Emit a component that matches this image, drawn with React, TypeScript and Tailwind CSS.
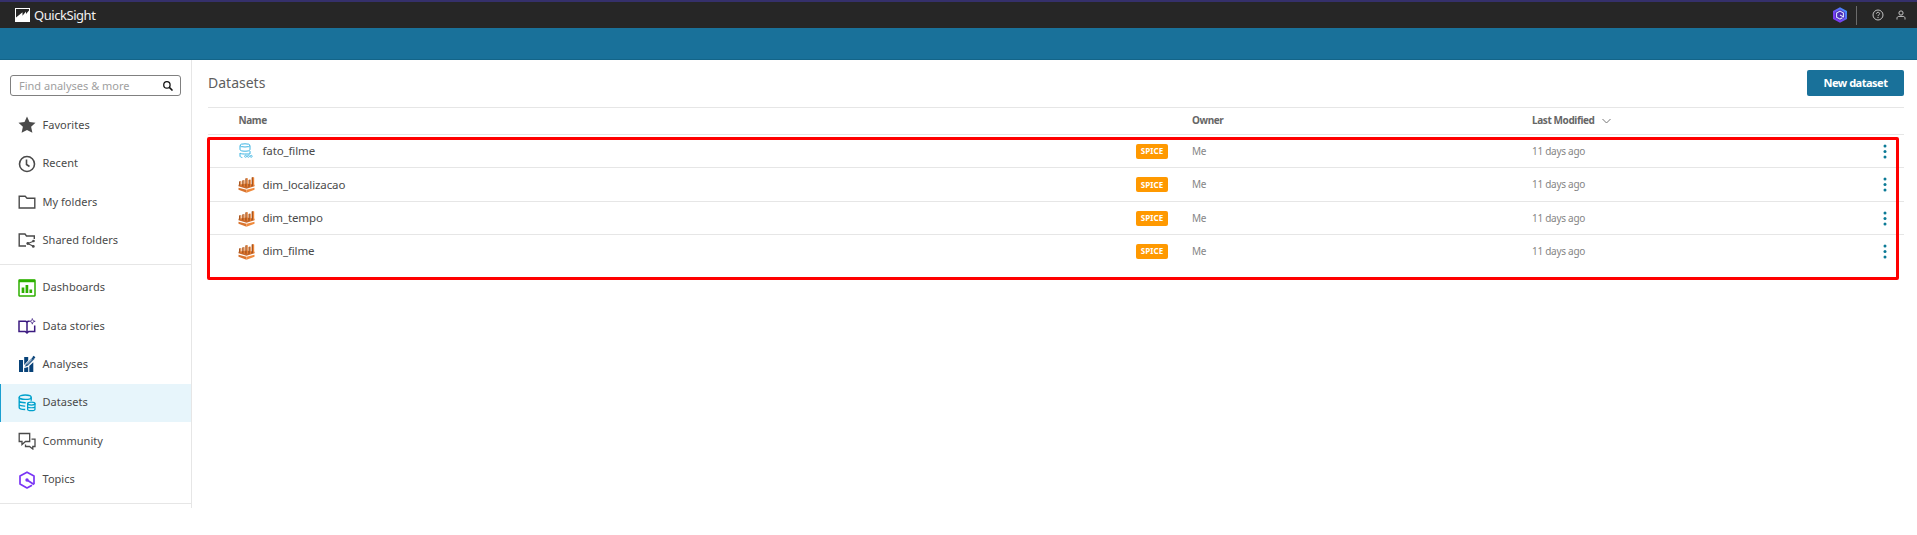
import type { ReactNode } from "react";

const Stroke = ({ color = "#4a4a4a", w = 1.3, children }: { color?: string; w?: number; children: ReactNode }) => (
  <svg width="18" height="18" viewBox="0 0 18 18" fill="none" stroke={color} strokeWidth={w} className="shrink-0">
    {children}
  </svg>
);

const StarIcon = () => (
  <Stroke w={0}>
    <path fill="#4a4a4a" d="M9 .5l2.500 5.500 6 .7-4.400 4.100 1.300 6L9 14.100 3.600 16.800l1.300-6L.5 6.700l6-.7z" />
  </Stroke>
);
const ClockIcon = () => (
  <Stroke w={1.6}>
    <circle cx="9" cy="9" r="7.500" />
    <path d="M8.500 4.500V9.500l3 2" />
  </Stroke>
);
const FolderIcon = () => (
  <Stroke w={1.4}>
    <path d="M1.200 3.300H7.200L9 5.200h7.800v9.800H1.200z" />
  </Stroke>
);
const SharedIcon = () => (
  <Stroke w={1.4}>
    <path d="M8 15H1.200V3H7L8.500 5h7.800v3" />
    <path d="M15.500 10.200L9.800 12.500l5.500 2.800" strokeWidth="1.100" />
    <g fill="#4a4a4a" stroke="none">
      <circle cx="15.500" cy="10" r="1.300" />
      <circle cx="9.800" cy="12.500" r="1.400" />
      <circle cx="15.300" cy="15.400" r="1.400" />
    </g>
  </Stroke>
);
const DashboardIcon = () => (
  <Stroke color="#2eb000" w={1.5}>
    <rect x="1" y="1" width="16" height="16" rx=".4" />
    <path d="M1 2h16" strokeWidth="2.500" />
    <path d="M5 14V8.500M8.900 14V6M12.800 14v-3.500" strokeWidth="2.700" />
  </Stroke>
);
const StoriesIcon = () => (
  <Stroke color="#3b1a80" w={1.5}>
    <path d="M11.500 4.300H10L9 5.500 7.800 4.300H1v10.200h6.200L9 16l1.700-1.500h6V8.500M9 5.500V16.500" />
    <path d="M14.300 1.500L15 3.600l2.200.7-2.200.7-.7 2.200-.7-2.200-2.200-.7 2.200-.7z" strokeWidth=".7" />
  </Stroke>
);
const AnalysesIcon = () => (
  <Stroke w={0}>
    <g fill="#084278">
      <path d="M1 5h4v12H1zM6.200 2h4v3.500L6.200 10zM6.200 13l4-1v5h-4zM11.300 11l4-3.800V17h-4z" />
      <path d="M6.500 12.200l1-3L14.700 2l2.200 1.800-7.300 7.200z" stroke="#fff" strokeWidth=".7" />
      <path d="M14.300 2.200L15.600.8l1.800 1.500-1.300 1.500z" />
    </g>
    <path d="M8.800 9.600L14 4.300" stroke="#fff" strokeWidth=".8" />
  </Stroke>
);
const DatasetsIcon = () => (
  <Stroke color="#00a1cc" w={1.4}>
    <ellipse cx="7.200" cy="3.200" rx="6" ry="2.200" />
    <path d="M1.200 3.200v10.300c0 1.100 2.500 2 6 2M13.200 3.200v3.500M1.200 6.800c0 1.300 3 2 6.500 1.900M1.200 10.400c0 1 2.800 1.800 6 1.700" />
    <ellipse cx="13.300" cy="9.600" rx="3.700" ry="1.500" />
    <path d="M9.600 9.600v5.600c0 2 7.400 2 7.400 0V9.600M9.600 12.400c0 1.800 7.400 1.800 7.400 0" strokeWidth="1.200" />
  </Stroke>
);
const CommunityIcon = () => (
  <Stroke w={1.3}>
    <path d="M1.200 1.500h10.500v8H7.500L4 12.500v-3H1.200z" />
    <path d="M13.500 7.200H17v7.300h-2.200v2.500L11.500 14.500H7.500v-2" />
  </Stroke>
);
const TopicsIcon = () => (
  <Stroke color="#7a35f5" w={1.7}>
    <path d="M14 14.200L9 17 2 13.100V5L9 1.200 16 5v8.200" strokeLinejoin="round" />
    <path d="M9 9l7 4.500" />
    <circle cx="9" cy="9" r="1.700" fill="#7a35f5" stroke="none" />
  </Stroke>
);

const TopicLogo = () => (
  <svg width="16" height="16" viewBox="0 0 16 16" fill="none">
    <defs>
      <linearGradient id="hex" x1="0" y1="1" x2="1" y2="0">
        <stop offset=".3" stopColor="#7a3cf0" />
        <stop offset="1" stopColor="#35a5ff" />
      </linearGradient>
    </defs>
    <path d="M8 .2l7 3.900v7.800L8 15.800l-7-3.900V4.100z" fill="url(#hex)" />
    <path d="M8 2.500l4.800 2.700v5.600L8 13.500l-4.800-2.700V5.200z" fill="#4c2ab8" />
    <path d="M10.500 10.800L8 12.100 4.600 10.100V6L8 4.100l3.400 1.900v3.900L8 8" stroke="#dce4ff" strokeWidth="1.100" />
  </svg>
);

const FileDbIcon = () => (
  <svg width="16" height="16" viewBox="0 0 16 16" fill="none" stroke="#3db4e2" strokeWidth="1">
    <ellipse cx="7" cy="2.400" rx="5" ry="1.600" />
    <path d="M2 2.400v4C2 7.700 4 8.200 7 8.200s5-.5 5-1.800v-4M2 10v3c0 .8.800 1.300 2.300 1.500M2 10c.6.700 2 1 4.500 1H12V8" />
    <g strokeWidth=".8">
      <circle cx="7.600" cy="13.300" r="1" />
      <circle cx="10.400" cy="13.300" r="1" />
      <circle cx="13.200" cy="13.300" r="1" />
    </g>
  </svg>
);
const AthenaIcon = () => (
  <svg width="17" height="17" viewBox="0 0 17 17">
    <path d="M.5 11.800l8 2v3l-8-3z" fill="#d9742f" />
    <path d="M16.500 11.800l-8 2v3l8-3z" fill="#f08a3c" />
    <path d="M.5 8.800l8-1.300 8 1.300v1.400l-8 2.600-8-2.600z" fill="#c9692c" />
    <path d="M1 5.500l1.500-.5v5L1 9.500zM4.200 4.500l1.500-.5v6.500l-1.500-.5zM7.300 2.500l1.500-.5v8.700l-1.500-.2zM10.500 4l1.400-.6v7l-1.400.3zM13.600 1.500l1.400-.5v8.800l-1.400.5z" fill="#a9561f" />
    <path d="M2.500 5l.9.200v5l-.9-.2zM5.700 4l.9.200v6.500l-.9-.2zM8.800 2l1 .3v8.500l-1-.1zM11.900 3.400l.9.300v7l-.9.100zM15 1l1.200.4v8.200L15 10z" fill="#f08536" />
  </svg>
);

type Item = { label: string; icon: ReactNode; active?: boolean };

const libraryItems: Item[] = [
  { label: "Favorites", icon: <StarIcon /> },
  { label: "Recent", icon: <ClockIcon /> },
  { label: "My folders", icon: <FolderIcon /> },
  { label: "Shared folders", icon: <SharedIcon /> },
];
const assetItems: Item[] = [
  { label: "Dashboards", icon: <DashboardIcon /> },
  { label: "Data stories", icon: <StoriesIcon /> },
  { label: "Analyses", icon: <AnalysesIcon /> },
  { label: "Datasets", icon: <DatasetsIcon />, active: true },
  { label: "Community", icon: <CommunityIcon /> },
  { label: "Topics", icon: <TopicsIcon /> },
];

const NavItem = ({ label, icon, active }: Item) => (
  <a
    className={
      "flex h-[38.4px] items-center gap-[6.5px] border-l pl-[17px] text-[11px] tracking-[0.03px] text-[#4a4a4a] " +
      (active ? "border-[#1a9fd0] bg-[#e7f5fb]" : "border-transparent")
    }
  >
    {icon}
    <span className="pb-[0.4px]">{label}</span>
  </a>
);

const rows = [
  { name: "fato_filme", icon: <FileDbIcon />, size: "h-[33px] border-b" },
  { name: "dim_localizacao", icon: <AthenaIcon />, size: "h-[34px] border-b" },
  { name: "dim_tempo", icon: <AthenaIcon />, size: "h-[33px] border-b" },
  { name: "dim_filme", icon: <AthenaIcon />, size: "h-[33px] pb-px" },
];

export default function App() {
  return (
    <div className="h-[535px] w-full overflow-hidden bg-white font-['Noto_Sans','Open_Sans',sans-serif]">
      <header className="flex h-7 items-center justify-between border-t-2 border-[#35306b] bg-[#262626] pr-[11px] pl-[15px]">
        <div className="flex items-center gap-[4px]">
          <svg width="15" height="14" viewBox="0 0 15 14">
            <path fill="#fff" d="M0 0h15v14H0z" />
            <path fill="#262626" d="M1 1h13v1.500L11 6V3.500L7.500 7.800V4.300L1 9.500z" />
          </svg>
          <span className="text-[13px] leading-4 tracking-[-0.45px] text-[#f2f2f2]">QuickSight</span>
        </div>
        <div className="flex items-center">
          <TopicLogo />
          <span className="ml-2 h-[19px] w-px bg-[#6b6b6b]" />
          <svg className="ml-[15px]" width="12" height="12" viewBox="0 0 12 12" fill="none" stroke="#c4c4c4">
            <circle cx="6" cy="6" r="5" />
            <path d="M4.400 4.800c0-2 3.200-2 3.200-.1C7.600 5.800 6 5.700 6 7.100M6 8v1.100" />
          </svg>
          <svg className="ml-[12px]" width="10" height="10" viewBox="0 0 10 10" fill="none" stroke="#c4c4c4">
            <circle cx="5" cy="3" r="2.100" />
            <path d="M1 9.500V8.200C1 7 2 6.400 3 6.400h4c1 0 2 .6 2 1.800v1.300" />
          </svg>
        </div>
      </header>
      <div className="h-8 border-b border-[#136488] bg-[#19719a]" />

      <div className="flex">
        <nav className="h-[448px] w-48 shrink-0 border-r border-[#e6e6e6] pt-[15px]">
          <div className="ml-[10px] flex h-[21px] w-[171px] items-center justify-between rounded-[3px] border border-[#808080] pr-[7px] pl-2">
            <span className="text-[11px] leading-4 text-[#a0a0a0]">Find analyses &amp; more</span>
            <svg width="10" height="10" viewBox="0 0 11 11" fill="none" stroke="#111" strokeWidth="1.400">
              <circle cx="4.300" cy="4.300" r="3.500" />
              <path d="M7 7l3.500 3.500" strokeWidth="1.700" />
            </svg>
          </div>
          <div className="h-[168.500px] border-b border-[#e6e6e6] pt-[10px]">
            {libraryItems.map((i) => (
              <NavItem key={i.label} {...i} />
            ))}
          </div>
          <div className="h-[239.500px] border-b border-[#e6e6e6] pt-[4px]">
            {assetItems.map((i) => (
              <NavItem key={i.label} {...i} />
            ))}
          </div>
        </nav>

        <main className="relative flex-1 pr-[13px] pl-4">
          <div className="flex h-[47px] items-start justify-between pt-[10px]">
            <h1 className="pt-[3px] text-[14px] leading-5 text-[#5e5e5e]">Datasets</h1>
            <button className="h-[26px] w-[97px] rounded-[2px] bg-[#19719a] text-[11px] font-bold tracking-[-0.5px] text-white">
              New dataset
            </button>
          </div>
          <div className="flex h-7 items-center border-y border-[#e6e6e6] text-[10px] font-bold tracking-[-0.4px] text-[#666]">
            <span className="w-[984px] pb-px pl-[30.5px]">Name</span>
            <span className="w-[340px] pb-px">Owner</span>
            <span className="pb-px">Last Modified</span>
            <svg className="ml-2" width="9" height="6" viewBox="0 0 9 6" fill="none" stroke="#777">
              <path d="M.5 1l4 4 4-4" />
            </svg>
          </div>
          {rows.map((r) => (
            <div
              key={r.name}
              className={"flex items-center border-[#e6e6e6] text-[10px] tracking-[-0.28px] text-[#858585] " + r.size}
            >
              <span className="flex w-[54.5px] items-center pl-[30px]">{r.icon}</span>
              <span className="w-[873.5px] text-[11.5px] tracking-[-0.12px] text-[#4a4a4a]">{r.name}</span>
              <span className="mr-6 flex h-[15px] w-8 items-center justify-center rounded-[2px] bg-[#ff9900] text-[8px] font-bold tracking-[0.1px] text-white">
                SPICE
              </span>
              <span className="w-[340px]">Me</span>
              <span className="flex-1">11 days ago</span>
              <svg className="mr-[17px]" width="4" height="15" viewBox="0 0 4 15" fill="#0b7a96">
                <circle cx="2" cy="2" r="1.500" />
                <circle cx="2" cy="7.500" r="1.500" />
                <circle cx="2" cy="13" r="1.500" />
              </svg>
            </div>
          ))}
          <div className="absolute top-[77px] left-[15px] h-[143px] w-[1692px] rounded-[2px] border-3 border-[#ff0000]" />
        </main>
      </div>
    </div>
  );
}
